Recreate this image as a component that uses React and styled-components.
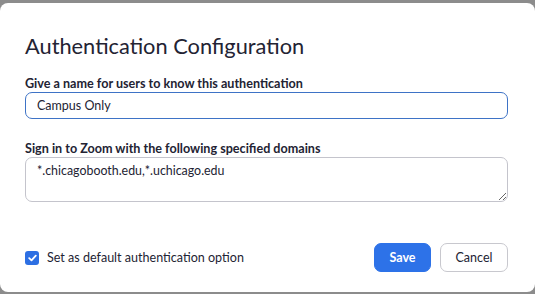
import React from "react";
import styled, { createGlobalStyle } from "styled-components";

const Global = createGlobalStyle`
  html, body { margin: 0; padding: 0; }
  body {
    background: #8c8c8c;
    font-family: Lato, "Open Sans", sans-serif;
    color: #232333;
    width: 535px;
    height: 294px;
    overflow: hidden;
  }
`;

const Dialog = styled.div`
  margin-top: 3px;
  width: 535px;
  height: 289px;
  box-sizing: border-box;
  background: #fff;
  border-radius: 8px;
  padding: 30px 27px 0 25px;
  display: flex;
  flex-direction: column;
`;

const Title = styled.h1`
  margin: 0;
  font-size: 21.8px;
  line-height: 26px;
  font-weight: 400;
  color: #232333;
`;

const Label = styled.label`
  display: block;
  margin-top: ${(p) => p.$top}px;
  font-size: 12.6px;
  line-height: 16px;
  font-weight: 700;
  color: #232333;
`;

const TextInput = styled.input`
  display: block;
  box-sizing: border-box;
  width: 100%;
  height: 27px;
  margin: 0;
  padding: 0 11px;
  border: 1px solid #3e73c6;
  border-radius: 7px;
  font-family: inherit;
  font-size: 12.5px;
  color: #232333;
  outline: none;
  background: #fff;
`;

const TextArea = styled.textarea`
  display: block;
  box-sizing: border-box;
  width: 100%;
  height: 45px;
  margin: 0;
  padding: 5px 11px;
  border: 1px solid #c4c4cc;
  border-radius: 7px;
  font-family: inherit;
  font-size: 12.4px;
  line-height: 15px;
  color: #232333;
  outline: none;
  background: #fff;
  resize: vertical;
`;

const Footer = styled.div`
  margin-top: 41px;
  display: flex;
  align-items: center;
  justify-content: space-between;
`;

const CheckRow = styled.label`
  display: flex;
  align-items: center;
  gap: 8px;
  font-size: 12.55px;
  color: #232333;
`;

const Box = styled.span`
  width: 14px;
  height: 14px;
  border-radius: 3px;
  background: #2d6fe3;
  display: flex;
  align-items: center;
  justify-content: center;
  margin-top: 1px;
`;

const Buttons = styled.div`
  display: flex;
  gap: 9px;
`;

const Button = styled.button`
  box-sizing: border-box;
  height: 29px;
  width: ${(p) => p.$w}px;
  border-radius: 7px;
  font-family: inherit;
  font-size: 12.5px;
  padding: 0;
  border: 1px solid ${(p) => (p.$primary ? "#2d72e8" : "#c8c8ce")};
  background: ${(p) => (p.$primary ? "#2d72e8" : "#fff")};
  color: ${(p) => (p.$primary ? "#fff" : "#232333")};
  font-weight: ${(p) => (p.$primary ? 700 : 400)};
`;

export default function App() {
  return (
    <>
      <Global />
      <Dialog>
        <Title>Authentication Configuration</Title>
        <Label $top={17}>Give a name for users to know this authentication</Label>
        <TextInput defaultValue="Campus Only" />
        <Label $top={22}>Sign in to Zoom with the following specified domains</Label>
        <TextArea defaultValue="*.chicagobooth.edu,*.uchicago.edu" />
        <Footer>
          <CheckRow>
            <Box>
              <svg width="9" height="8" viewBox="0 0 9 8">
                <path d="M1.2 4.2 L3.5 6.3 L7.8 1.6" fill="none" stroke="#fff" strokeWidth="1.8" strokeLinecap="round" strokeLinejoin="round" />
              </svg>
            </Box>
            Set as default authentication option
          </CheckRow>
          <Buttons>
            <Button $primary $w={57}>Save</Button>
            <Button $w={68}>Cancel</Button>
          </Buttons>
        </Footer>
      </Dialog>
    </>
  );
}
